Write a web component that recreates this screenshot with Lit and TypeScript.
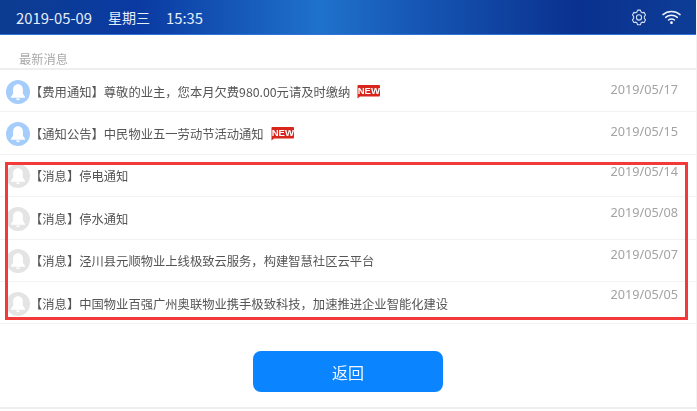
import { LitElement, html, css, svg } from 'lit';
import { customElement } from 'lit/decorators.js';

type Message = { tag: string; text: string; date: string; unread?: boolean; isNew?: boolean; lift: number };

const MESSAGES: Message[] = [
  { tag: '【费用通知】', text: '尊敬的业主，您本月欠费980.00元请及时缴纳', date: '2019/05/17', unread: true, isNew: true, lift: 3 },
  { tag: '【通知公告】', text: '中民物业五一劳动节活动通知', date: '2019/05/15', unread: true, isNew: true, lift: 3 },
  { tag: '【消息】', text: '停电通知', date: '2019/05/14', lift: 5 },
  { tag: '【消息】', text: '停水通知', date: '2019/05/08', lift: 7 },
  { tag: '【消息】', text: '泾川县元顺物业上线极致云服务，构建智慧社区云平台', date: '2019/05/07', lift: 7 },
  { tag: '【消息】', text: '中国物业百强广州奥联物业携手极致科技，加速推进企业智能化建设', date: '2019/05/05', lift: 10 },
];

const bell = (on: boolean) => html`
  <svg class="bell" viewBox="0 0 24 24" width="24" height="24">
    <circle cx="12" cy="12" r="12" fill=${on ? '#a5cdfb' : '#e4e4e4'}></circle>
    <path fill="#fff" d="M12 4.2c-3.1 0-4.9 2.4-4.9 5.4v4.2L5 16.8v.9h14v-.9l-2.1-3V9.6c0-3-1.8-5.4-4.9-5.4z"></path>
    <path fill="#fff" d="M10 18.6h4c-.2 1-1 1.6-2 1.6s-1.8-.6-2-1.6z"></path>
  </svg>
`;

const gear = svg`
  <path fill="none" stroke="#d6e1f2" stroke-width="1" stroke-linejoin="round"
    d="M6.2 1h2.6l.7 1.7 1 .6 1.8-.3 1.300 2.300-1.100 1.500v1.400l1.100 1.500-1.300 2.300-1.800-.3-1 .6-.7 1.700H6.200l-.7-1.700-1-.6-1.800.3-1.300-2.300 1.100-1.500V6.800L1.400 5.300l1.300-2.300 1.800.3 1-.6z"></path>
  <circle cx="7.500" cy="7.500" r="2.400" fill="none" stroke="#d6e1f2" stroke-width="1"></circle>
`;

@customElement('app-root')
export class AppRoot extends LitElement {
  static styles = css`
    :host {
      display: block;
      position: relative;
      width: 697px;
      height: 411px;
      background: #fff;
      overflow: hidden;
      font-family: 'Noto Sans CJK SC', 'Noto Sans', sans-serif;
    }

    .page {
      display: flex;
      flex-direction: column;
      height: 409px;
      box-sizing: border-box;
      border-right: 1px solid #f2f2f2;
      border-bottom: 2px solid #eee;
      filter: blur(0.45px);
    }

    /* ── Status bar ─────────────────────────────── */
    .bar {
      flex: none;
      height: 35px;
      box-sizing: border-box;
      display: flex;
      align-items: center;
      padding: 0 15px 0 16px;
      color: #e6edf8;
      font-size: 14px;
      border-bottom: 1px solid #2f74d6;
      background: linear-gradient(90deg, #0c3c90 0%, #0a3aa2 20%, #1f72cb 46%, #1656b4 60%, #0a318f 83%, #0d3d97 100%);
    }
    .bar span { margin-right: 16px; }
    .bar .num { font-size: 14.8px; }
    .bar .icons { margin-left: auto; display: flex; align-items: center; gap: 15px; }
    .bar .gear { margin-top: 2px; }

    /* ── Message list ───────────────────────────── */
    .title {
      flex: none;
      height: 35px;
      box-sizing: border-box;
      padding: 16px 0 0 19px;
      font-size: 12.25px;
      line-height: 17px;
      color: #aaa;
      border-bottom: 2px solid #eee;
    }
    .row {
      flex: none;
      height: 42.4px;
      box-sizing: border-box;
      display: flex;
      align-items: center;
      padding: 2px 18px 0 6px;
      border-bottom: 1px solid #f2f2f2;
    }
    .bell { flex: none; }
    .text { font-size: 12.3px; color: #555; white-space: nowrap; }
    .new { margin-left: 7px; flex: none; }
    .date {
      margin-left: auto;
      font-family: 'Noto Sans', sans-serif;
      font-size: 12.7px;
      color: #a3a3a3;
    }

    /* ── Footer ─────────────────────────────────── */
    .footer {
      flex: 1;
      display: flex;
      justify-content: center;
      align-items: flex-start;
      padding-top: 27px;
    }
    .back {
      width: 190px;
      height: 41px;
      border: none;
      border-radius: 8px;
      background: #0a84ff;
      color: #f2f8ff;
      font: 16px 'Noto Sans CJK SC', sans-serif;
    }

    /* annotation box over the last rows */
    .mark {
      position: absolute;
      left: 5px;
      top: 162px;
      width: 683px;
      height: 158px;
      box-sizing: border-box;
      border: 3px solid #f23a3a;
      pointer-events: none;
    }
  `;

  render() {
    return html`
      <div class="page">
        <header class="bar">
          <span class="num">2019-05-09</span>
          <span>星期三</span>
          <span class="num">15:35</span>
          <div class="icons">
            <svg class="gear" width="16" height="18" viewBox="0 0 15 16" preserveAspectRatio="none">${gear}</svg>
            <svg width="19" height="16" viewBox="0 0 20 16" fill="none" stroke="#eef3fb" stroke-width="1.5" stroke-linecap="round">
              <path d="M1 5.500C6 1 14 1 19 5.500"></path>
              <path d="M3.800 8.400C7.400 5.400 12.600 5.400 16.200 8.400"></path>
              <path d="M6.800 11.200C8.700 9.800 11.300 9.800 13.200 11.200"></path>
              <circle cx="10" cy="14" r="1.400" fill="#fff" stroke="none"></circle>
            </svg>
          </div>
        </header>
        <div class="title">最新消息</div>
        ${MESSAGES.map(
          (m) => html`
            <div class="row">
              ${bell(!!m.unread)}
              <span class="text">${m.tag}${m.text}</span>
              ${m.isNew
                ? html`<svg class="new" width="23" height="14" viewBox="0 0 23 14">
                    <path fill="#d9261c" d="M1 0h21a1 1 0 0 1 1 1v9.500a1 1 0 0 1-1 1H3l-2.500 2V1a1 1 0 0 1 .5-1z"></path>
                    <text x="11.800" y="9.300" text-anchor="middle" fill="#fff" font-size="9.500" font-weight="700" font-family="Liberation Sans">NEW</text>
                  </svg>`
                : ''}
              <span class="date" style="padding-bottom:${m.lift * 2}px">${m.date}</span>
            </div>
          `
        )}
        <div class="footer"><button class="back">返回</button></div>
      </div>
      <div class="mark"></div>
    `;
  }
}
